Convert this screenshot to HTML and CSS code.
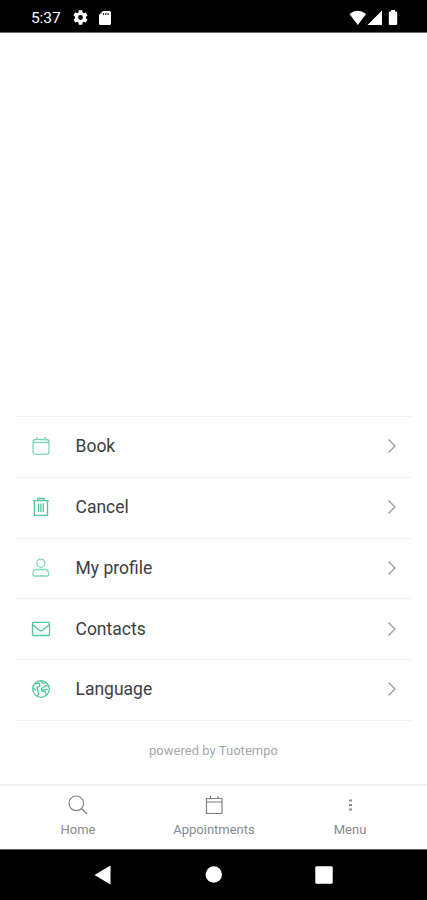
FILE: index.html
```html
<!DOCTYPE html>
<html lang="en">
<head>
<meta charset="utf-8">
<title>Menu</title>
<link rel="stylesheet" href="styles.css">
</head>
<body>
<div class="phone">
  <header class="status">
    <span class="clock">5:37</span>
    <svg class="gear" width="15" height="15" viewBox="2 2 20 20"><path fill="#fff" d="M19.14 12.94c.04-.3.06-.61.06-.94 0-.32-.02-.64-.07-.94l2.03-1.58c.18-.14.23-.41.12-.61l-1.92-3.32c-.12-.22-.37-.29-.59-.22l-2.39.96c-.5-.38-1.03-.7-1.62-.94l-.36-2.54c-.04-.24-.24-.41-.48-.41h-3.84c-.24 0-.43.17-.47.41l-.36 2.54c-.59.24-1.13.57-1.62.94l-2.39-.96c-.22-.08-.47 0-.59.22L2.74 8.87c-.12.21-.08.47.12.61l2.03 1.58c-.05.3-.09.63-.09.94s.02.64.07.94l-2.03 1.58c-.18.14-.23.41-.12.61l1.92 3.32c.12.22.37.29.59.22l2.39-.96c.5.38 1.03.7 1.62.94l.36 2.54c.05.24.24.41.48.41h3.84c.24 0 .44-.17.47-.41l.36-2.54c.59-.24 1.13-.56 1.62-.94l2.39.96c.22.08.47 0 .59-.22l1.92-3.32c.12-.22.07-.47-.12-.61zM12 15.200a3.200 3.200 0 1 1 0-6.400 3.200 3.200 0 0 1 0 6.400z"/></svg>
    <svg class="card" width="12" height="14" viewBox="0 0 12 14"><path fill="#fff" d="M4 0h6.500q1.500 0 1.500 1.500v11q0 1.500-1.500 1.500h-9Q0 14 0 12.500V4z"/><path stroke="#222" stroke-width="1.200" d="M4.500 2v2M6.800 2v2M9.100 2v2"/></svg>
    <svg class="signals" width="49" height="16" viewBox="0 0 49 16"><path fill="#fff" d="M.5 4Q8.500-2.500 17 4L8.800 15z"/><path fill="#fff" d="M33 .5V15H18.500z"/><path fill="#fff" d="M42 0h4v1.500h1q1.200 0 1.200 1.200v11.100q0 1.200-1.200 1.200h-6q-1.200 0-1.200-1.200V2.700q0-1.200 1.200-1.200h1z"/></svg>
  </header>

  <main class="content">
    <ul class="menu">
      <li class="item">
        <svg class="icon" viewBox="0 0 20 20"><rect x="2" y="3.500" width="16" height="14.800" rx="2.500"/><path d="M2 6.500h16M5.800 1v2.500M14.200 1v2.500"/></svg>
        <span class="label">Book</span>
        <svg class="chevron" viewBox="0 0 10 16"><path d="M1.500 1.500 8 8l-6.500 6.500"/></svg>
      </li>
      <li class="item">
        <svg class="icon strong" viewBox="0 0 20 20"><path d="M2 3.700h15.800M6.800 3.700V1.500h6.200v2.200M3.300 3.700v14.600h13.200V3.700M7.500 6.500v8.500M9.900 6.500v8.500M12.300 6.500v8.500"/></svg>
        <span class="label">Cancel</span>
        <svg class="chevron" viewBox="0 0 10 16"><path d="M1.500 1.500 8 8l-6.500 6.500"/></svg>
      </li>
      <li class="item">
        <svg class="icon" viewBox="0 0 20 20"><circle cx="9.900" cy="5.200" r="4.100"/><path d="M5.500 11.500h8.800q3.500.5 3.500 4.500 0 2-1.500 2H3.500Q2 18 2 16q0-4 3.500-4.500z"/></svg>
        <span class="label">My profile</span>
        <svg class="chevron" viewBox="0 0 10 16"><path d="M1.500 1.500 8 8l-6.500 6.500"/></svg>
      </li>
      <li class="item">
        <svg class="icon strong" viewBox="0 0 20 20"><rect x="1.500" y="3.300" width="17" height="13.200" rx="1"/><path d="m1.500 5.500 6.500 5.500q2 1.500 4 0l6.500-5.500"/></svg>
        <span class="label">Contacts</span>
        <svg class="chevron" viewBox="0 0 10 16"><path d="M1.500 1.500 8 8l-6.500 6.500"/></svg>
      </li>
      <li class="item">
        <svg class="icon strong" viewBox="0 0 20 20"><circle cx="10" cy="10" r="8.300"/><path d="M4 4.500 8 4l1 2.500-3 2.500 1 3 1 3-2 2M2 9l3 2.500M10 2l2 2.500 3.500-1M18 8l-3-1.500-4.500 3 .5 2.500 3.500 1 .5 3.500M11 11l5.500-.5"/></svg>
        <span class="label">Language</span>
        <svg class="chevron" viewBox="0 0 10 16"><path d="M1.500 1.500 8 8l-6.500 6.500"/></svg>
      </li>
    </ul>
    <p class="powered">powered by Tuotempo</p>
  </main>

  <nav class="tabs">
    <div class="tab">
      <svg width="20" height="20" viewBox="0 0 20 20"><circle cx="8.300" cy="8.300" r="7.300"/><path d="m13.500 13.500 5.500 5.500"/></svg>
      <span>Home</span>
    </div>
    <div class="tab">
      <svg width="20" height="20" viewBox="0 0 20 20"><path d="M2.500 3.500h15.500v15H2.500zM2.500 7h15.500M6.500 1v2.500M14 1v2.500"/></svg>
      <span>Appointments</span>
    </div>
    <div class="tab">
      <svg class="dots" width="20" height="20" viewBox="0 0 20 20"><path d="M9 4.500h3v2H9zM9 9h3v2H9zM9 13.500h3v2H9z"/></svg>
      <span>Menu</span>
    </div>
  </nav>

  <footer class="system">
    <svg width="17" height="20" viewBox="0 0 17 20"><path fill="#fff" d="M16.500.5v19L.5 10z"/></svg>
    <svg width="17" height="17" viewBox="0 0 17 17"><circle cx="8.800" cy="8.500" r="8.200" fill="#fff"/></svg>
    <svg width="18" height="18" viewBox="0 0 18 18"><rect x=".3" y=".3" width="17.400" height="17.400" rx="1" fill="#fff"/></svg>
  </footer>
</div>
</body>
</html>
```
FILE: styles.css
```css
* { box-sizing: border-box; }

body {
  margin: 0;
  background: #fff;
  font-family: Roboto, "Liberation Sans", sans-serif;
}

.phone {
  width: 427px;
  height: 900px;
  display: flex;
  flex-direction: column;
}

.status {
  height: 33px;
  flex: none;
  display: flex;
  align-items: center;
  padding: 3px 29px 0 31px;
  background: #000;
  border-bottom: 1px solid #707070;
  color: #fff;
}

.clock { width: 42px; padding-top: 1px; font-size: 15.5px; letter-spacing: -0.1px; }
.card { margin-left: 11px; }
.signals { margin-left: auto; }

.content {
  flex: 1;
  display: flex;
  flex-direction: column;
  justify-content: flex-end;
  padding: 0 15px;
}

.menu {
  list-style: none;
  margin: 0;
  padding: 0;
  border-top: 1px solid #f2f2f2;
}

.item {
  height: 60.8px;
  display: flex;
  align-items: center;
  padding: 0 15px 1.6px 16px;
  border-bottom: 1px solid #f2f2f2;
}

.icon {
  width: 20px;
  height: 20px;
  fill: none;
  stroke: #83d6ba;
  stroke-width: 1.3;
}

.icon.strong { stroke: #52c6a0; }

.label {
  flex: 1;
  margin-left: 24.5px;
  font-size: 17.5px;
  color: #3c3e42;
}

.chevron {
  width: 10px;
  height: 16px;
  fill: none;
  stroke: #999;
  stroke-width: 1.3;
}

.powered {
  height: 64px;
  margin: 0 0 -1px;
  padding-top: 21px;
  text-align: center;
  font-size: 13px;
  letter-spacing: 0.03px;
  line-height: 18px;
  color: #a4a8ab;
}

.tabs {
  height: 65px;
  flex: none;
  display: flex;
  padding: 0 9px 0 10px;
  border-top: 2px solid #f2f2f2;
}

.tab {
  flex: 1;
  display: flex;
  flex-direction: column;
  align-items: center;
  padding-top: 9px;
  font-size: 13px;
  line-height: 18px;
  color: #868b8f;
}

.tab svg {
  margin-bottom: 6px;
  fill: none;
  stroke: #7d8286;
  stroke-width: 1.2;
}

.tab .dots { fill: #85898c; stroke: none; }

.system {
  height: 51px;
  flex: none;
  display: flex;
  align-items: center;
  justify-content: space-between;
  padding: 0 94px 1px;
  background: #000;
  border-top: 1px solid #606060;
}
```
